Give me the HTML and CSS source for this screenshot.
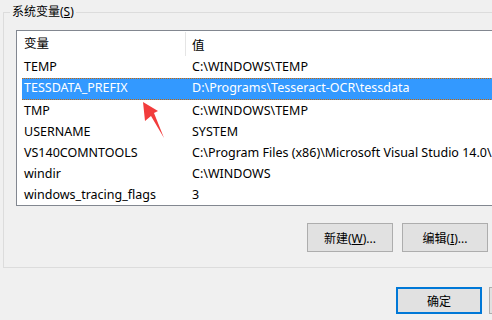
FILE: index.html
```html
<!DOCTYPE html>
<html lang="zh-CN">
<head>
    <meta charset="UTF-8">
    <title>环境变量</title>
    <link rel="stylesheet" href="styles.css">
</head>
<body>
    <div class="dialog">
        <fieldset class="group">
            <legend>系统变量(<u>S</u>)</legend>
            <div class="listbox">
                <div class="list-head">
                    <div class="head-name">变量</div>
                    <div class="head-value">值</div>
                </div>
                <div class="row"><div class="col-name">TEMP</div><div class="col-value">C:\WINDOWS\TEMP</div></div>
                <div class="row selected"><div class="col-name">TESSDATA_PREFIX</div><div class="col-value">D:\Programs\Tesseract-OCR\tessdata</div></div>
                <div class="row"><div class="col-name">TMP</div><div class="col-value">C:\WINDOWS\TEMP</div></div>
                <div class="row"><div class="col-name">USERNAME</div><div class="col-value">SYSTEM</div></div>
                <div class="row"><div class="col-name">VS140COMNTOOLS</div><div class="col-value">C:\Program Files (x86)\Microsoft Visual Studio 14.0\</div></div>
                <div class="row"><div class="col-name">windir</div><div class="col-value">C:\WINDOWS</div></div>
                <div class="row"><div class="col-name">windows_tracing_flags</div><div class="col-value">3</div></div>
            </div>
            <div class="group-buttons">
                <button>新建(<u>W</u>)...</button>
                <button>编辑(<u>I</u>)...</button>
            </div>
        </fieldset>
        <div class="dialog-buttons">
            <button class="default">确定</button>
            <button class="cancel"></button>
        </div>
        <!-- red screenshot arrow pointing at the selected row -->
        <svg class="arrow" width="30" height="45" viewBox="0 0 30 45">
            <polygon points="3,4 18,13 14,15 24,40 11,18 5,23" fill="#f23c3c"/>
        </svg>
    </div>
</body>
</html>
```

FILE: styles.css
```css
body {
    margin: 0;
    padding: 0;
    background: #f0f0f0;
    font-family: 'Noto Sans', 'Noto Sans CJK SC', sans-serif;
    font-size: 12px;
    color: #000;
    overflow: hidden;
    width: 492px;
    height: 320px;
}
.dialog {
    position: relative;
    width: 600px;
}
.group {
    margin: 3px 0 0 3px;
    padding: 0 0 15px 12px;
    border: 1px solid #dcdcdc;
    width: 560px;
    box-sizing: border-box;
}
.group legend {
    margin-left: -6px;
    padding: 0 2px;
    line-height: 18px;
}
u {
    text-decoration: underline;
    text-underline-offset: 1px;
}
.listbox {
    margin-top: 9px;
    width: 520px;
    height: 176px;
    border: 1px solid #828790;
    background: #fff;
    box-sizing: border-box;
    font-size: 12.5px;
}
.list-head {
    display: flex;
    align-items: center;
    height: 26px;
    padding-left: 5px;
}
.head-name {
    width: 164px;
    height: 24px;
    line-height: 24px;
    padding-left: 2px;
    border-right: 1px solid #e5e5e5;
    box-sizing: border-box;
    flex-shrink: 0;
}
.head-value {
    padding-left: 6px;
}
.row {
    display: flex;
    height: 20px;
    line-height: 20px;
    margin: 0 0 1px 5px;
    white-space: nowrap;
}
.col-name {
    width: 168px;
    padding-left: 2px;
    box-sizing: border-box;
    flex-shrink: 0;
}
.col-value {
    padding-left: 2px;
}
.row.selected {
    background: #3399ff;
    color: #fff;
    border-top: 1px dotted #cc6600;
    border-bottom: 1px dotted #cc6600;
    line-height: 18px;
}
.group-buttons {
    display: flex;
    gap: 9px;
    margin-top: 17px;
    padding-left: 291px;
}
button {
    font-family: inherit;
    font-size: 12px;
    color: #000;
    width: 86px;
    height: 29px;
    padding: 0;
    background: #e1e1e1;
    border: 1px solid #adadad;
    box-sizing: border-box;
}
.dialog-buttons {
    display: flex;
    gap: 7px;
    margin-top: 19px;
    padding-left: 396px;
}
.dialog-buttons button {
    height: 27px;
}
.dialog-buttons .default {
    border: 2px solid #0078d7;
}
.arrow {
    position: absolute;
    left: 140px;
    top: 95px;
}
```
